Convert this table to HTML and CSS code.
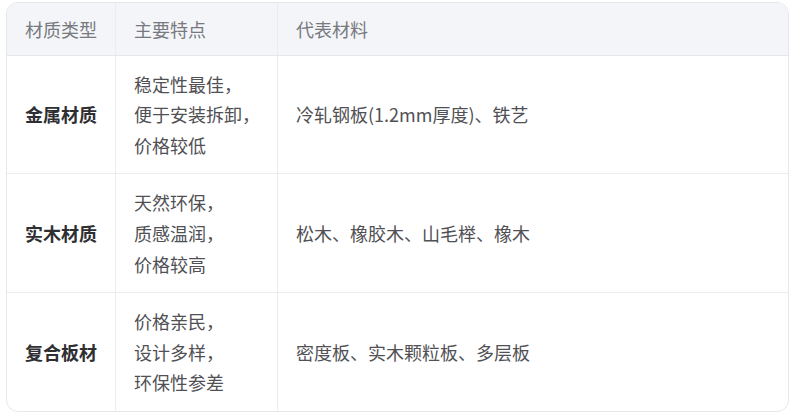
FILE: index.html
```html
<!DOCTYPE html>
<html lang="zh">
<head>
<meta charset="utf-8">
<link rel="stylesheet" href="styles.css">
</head>
<body>
<div class="wrap">
  <table class="tbl">
    <colgroup>
      <col class="c1">
      <col class="c2">
      <col>
    </colgroup>
    <thead>
      <tr><th>材质类型</th><th>主要特点</th><th>代表材料</th></tr>
    </thead>
    <tbody>
      <tr>
        <td class="name">金属材质</td>
        <td>稳定性最佳，<br>便于安装拆卸，<br>价格较低</td>
        <td>冷轧钢板(1.2mm厚度)、铁艺</td>
      </tr>
      <tr>
        <td class="name">实木材质</td>
        <td>天然环保，<br>质感温润，<br>价格较高</td>
        <td>松木、橡胶木、山毛榉、橡木</td>
      </tr>
      <tr>
        <td class="name">复合板材</td>
        <td>价格亲民，<br>设计多样，<br>环保性参差</td>
        <td>密度板、实木颗粒板、多层板</td>
      </tr>
    </tbody>
  </table>
</div>
</body>
</html>
```
FILE: styles.css
```css
html, body {
  margin: 0;
  padding: 0;
  background: #ffffff;
}
.wrap {
  padding: 2px 7px 0 6px;
}
.tbl {
  width: 100%;
  border-collapse: separate;
  border-spacing: 0;
  border: 1px solid #e6e7eb;
  border-radius: 12px;
  overflow: hidden;
  table-layout: fixed;
  font-family: "Noto Sans CJK SC", "Noto Sans", sans-serif;
  font-size: 18px;
  line-height: 30.6px;
  color: #505055;
}
.c1 { width: 109px; }
.c2 { width: 162px; }
.tbl th, .tbl td {
  text-align: left;
  vertical-align: middle;
  border-right: 1px solid #ececef;
  border-bottom: 1px solid #ececef;
  white-space: nowrap;
}
.tbl th:last-child, .tbl td:last-child { border-right: none; }
.tbl tbody tr:last-child td { border-bottom: none; }
.tbl th {
  background: #f4f5f8;
  color: #77797f;
  font-weight: 400;
  padding: 10.5px 18px 10.5px 18px;
  border-bottom-color: #e6e7eb;
}
.tbl td {
  padding: 13px 18px 13px 18px;
}
.tbl td.name {
  font-weight: 700;
  color: #2f2f33;
}
```
